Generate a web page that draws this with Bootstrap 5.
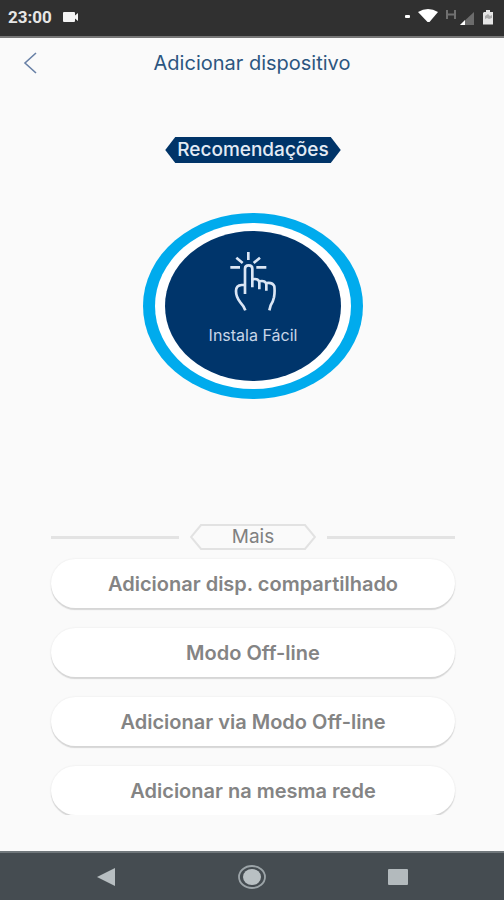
<!DOCTYPE html>
<html lang="pt-BR">
<head>
<meta charset="utf-8">
<meta name="viewport" content="width=device-width, initial-scale=1">
<title>Adicionar dispositivo</title>
<link href="https://cdn.jsdelivr.net/npm/bootstrap@5.3.0/dist/css/bootstrap.min.css" rel="stylesheet">
<style>
  body { background: #fafafa; font-family: Inter, Roboto, sans-serif; color: #808080; }
  svg { display: block; }
  .status-bar { background: #303030; color: #e6e6e6; min-height: 38px; padding: 0 8px 2px; border-bottom: 2px solid #777; font: 700 17px/20px Roboto, sans-serif; }
  .title-bar { min-height: 50px; padding: 0 16px; }
  .title-bar h1 { font-size: 20px; line-height: 24px; color: #2c5680; font-weight: 400; }
  .side { width: 28px; }
  .intro { padding: 49px 0 0 2px; }
  .ribbon { background: #003468; color: #e4ebf5; font-size: 19px; line-height: 26px; font-weight: 500; padding: 0 12px; clip-path: polygon(10px 0, calc(100% - 10px) 0, 100% 50%, calc(100% - 10px) 100%, 10px 100%, 0 50%); }
  .easy { width: 220px; height: 186px; margin-top: 50px; padding: 10px 12px; border-radius: 50%; background: #00abed; }
  .easy-gap { padding: 8px 10px; border-radius: 50%; background: #fff; }
  .easy-core { border-radius: 50%; background: #00356b; color: #c9d6e8; font-size: 16px; line-height: 20px; padding-top: 20px; gap: 13px; }
  .more { padding: 0 46px 36px 48px; }
  .more-head { gap: 11px; margin: 0 3px 6px; }
  .rule { height: 3px; background: #e3e3e3; }
  .tag { width: 126px; display: grid; }
  .tag > * { grid-area: 1 / 1; }
  .tag h2 { font-size: 19px; line-height: 26px; font-weight: 400; z-index: 1; }
  .options { gap: 20px; overflow: hidden; padding: 3px 3px 0; }
  .option { background: #fff; color: #848484; border: 0; border-radius: 28px; min-height: 49px; font-size: 20px; line-height: 24px; font-weight: 600; box-shadow: 0 2px 1px #d6d6d6, 0 0 2px #e4e4e4; }
  .option:hover, .option:active { background: #f4f4f4 !important; color: #666 !important; }
  .system-nav { background: #454c51; min-height: 49px; border-top: 2px solid #70777b; padding: 0 36px; }
</style>
<script src="https://cdn.jsdelivr.net/npm/bootstrap@5.3.0/dist/js/bootstrap.bundle.min.js"></script>
</head>
<body>
<div class="min-vh-100 d-flex flex-column">
  <div class="status-bar d-flex align-items-center justify-content-between">
    <div class="d-flex align-items-center gap-2">
      <span>23:00</span>
      <svg width="22" height="12" viewBox="0 0 22 12" fill="#f4f4f4" aria-hidden="true"><path d="M4 1h10q1 0 1 1v2.500l3-2.500v8l-3-2.500v2.500q0 1-1 1H4q-1 0-1-1V2q0-1 1-1z"/></svg>
    </div>
    <svg width="94" height="20" viewBox="0 0 94 20" aria-hidden="true">
      <rect x="3" y="8" width="5" height="3" rx="1" fill="#fff"/>
      <path d="M16 5q10-6 20 0l-8.500 10h-2z" fill="#fff"/>
      <path d="M45 3v9M53 3v9M45 7.500h8" stroke="#707070" stroke-width="2" fill="none"/>
      <path d="M72 5v13H58z" fill="#6c6c6c"/>
      <path d="M63 13v5h-5z" fill="#fff"/>
      <path d="M82 5h2V3h4v2h3v12.500H81V6z" fill="#e5e5e5"/>
      <path d="M83 9l3-2 2 2 2-1v3l-3 1-2-1-2 1z" fill="#aaa"/>
    </svg>
  </div>

  <header class="title-bar d-flex align-items-center justify-content-between">
    <button type="button" class="btn p-0 border-0 side d-flex justify-content-center" aria-label="Voltar">
      <svg width="14" height="22" viewBox="0 0 14 22" fill="none" stroke="#6880a6" stroke-width="1.600"><path d="M13 1L2 11l11 10"/></svg>
    </button>
    <h1 class="m-0">Adicionar dispositivo</h1>
    <span class="side"></span>
  </header>

  <main class="flex-grow-1 d-flex flex-column justify-content-between">
    <section class="intro d-flex flex-column align-items-center">
      <h2 class="ribbon m-0">Recomendações</h2>
      <button type="button" class="easy border-0 d-flex">
        <span class="easy-gap flex-fill align-self-stretch d-flex">
          <span class="easy-core flex-fill d-flex flex-column align-items-center">
            <svg width="48" height="61" viewBox="298 393 144 183" fill="none" stroke="#dbe6f5" stroke-width="8" stroke-linejoin="round" aria-hidden="true">
              <path d="M356 396v24M320 413l19 16M391 413l-19 16M302 442h29M380 442h30"/>
              <path d="M346 522V446q0-10 11-10t11 10v56"/>
              <path d="M346 495h-10q-17 1-17 18 0 18 13 34 11 12 15 24"/>
              <path d="M368 478q20-4 21 10v20M389 484q20-4 21 10v18M410 489q19-3 24 10 2 16-1 33-3 15-10 24l-4 15"/>
            </svg>
            <span>Instala Fácil</span>
          </span>
        </span>
      </button>
    </section>

    <section class="more">
      <div class="more-head d-flex align-items-center">
        <div class="rule flex-fill"></div>
        <div class="tag">
          <svg width="126" height="26" viewBox="0 0 126 26" aria-hidden="true"><path d="M11 1h104l10 12-10 12H11L1 13z" fill="#fafafa" stroke="#e2e2e2" stroke-width="2"/></svg>
          <h2 class="m-0 text-center">Mais</h2>
        </div>
        <div class="rule flex-fill"></div>
      </div>
      <div class="options d-grid">
        <button type="button" class="btn option">Adicionar disp. compartilhado</button>
        <button type="button" class="btn option">Modo Off-line</button>
        <button type="button" class="btn option">Adicionar via Modo Off-line</button>
        <button type="button" class="btn option">Adicionar na mesma rede</button>
      </div>
    </section>
  </main>

  <nav class="system-nav d-flex align-items-center justify-content-around" aria-label="Sistema">
    <button type="button" class="btn p-0 border-0" aria-label="Voltar"><svg width="20" height="18" viewBox="0 0 20 18"><path d="M1 9L19 0v18z" fill="#b7bec1"/></svg></button>
    <button type="button" class="btn p-0 border-0" aria-label="Início"><svg width="30" height="26" viewBox="0 0 30 26"><ellipse cx="15" cy="13" rx="13" ry="11" fill="none" stroke="#9ca4a8" stroke-width="1.800"/><ellipse cx="15" cy="13" rx="9" ry="8" fill="#b9c0c3"/></svg></button>
    <button type="button" class="btn p-0 border-0" aria-label="Recentes"><svg width="20" height="16" viewBox="0 0 20 16"><rect width="20" height="16" rx="1" fill="#b3babd"/></svg></button>
  </nav>
</div>
</body>
</html>
